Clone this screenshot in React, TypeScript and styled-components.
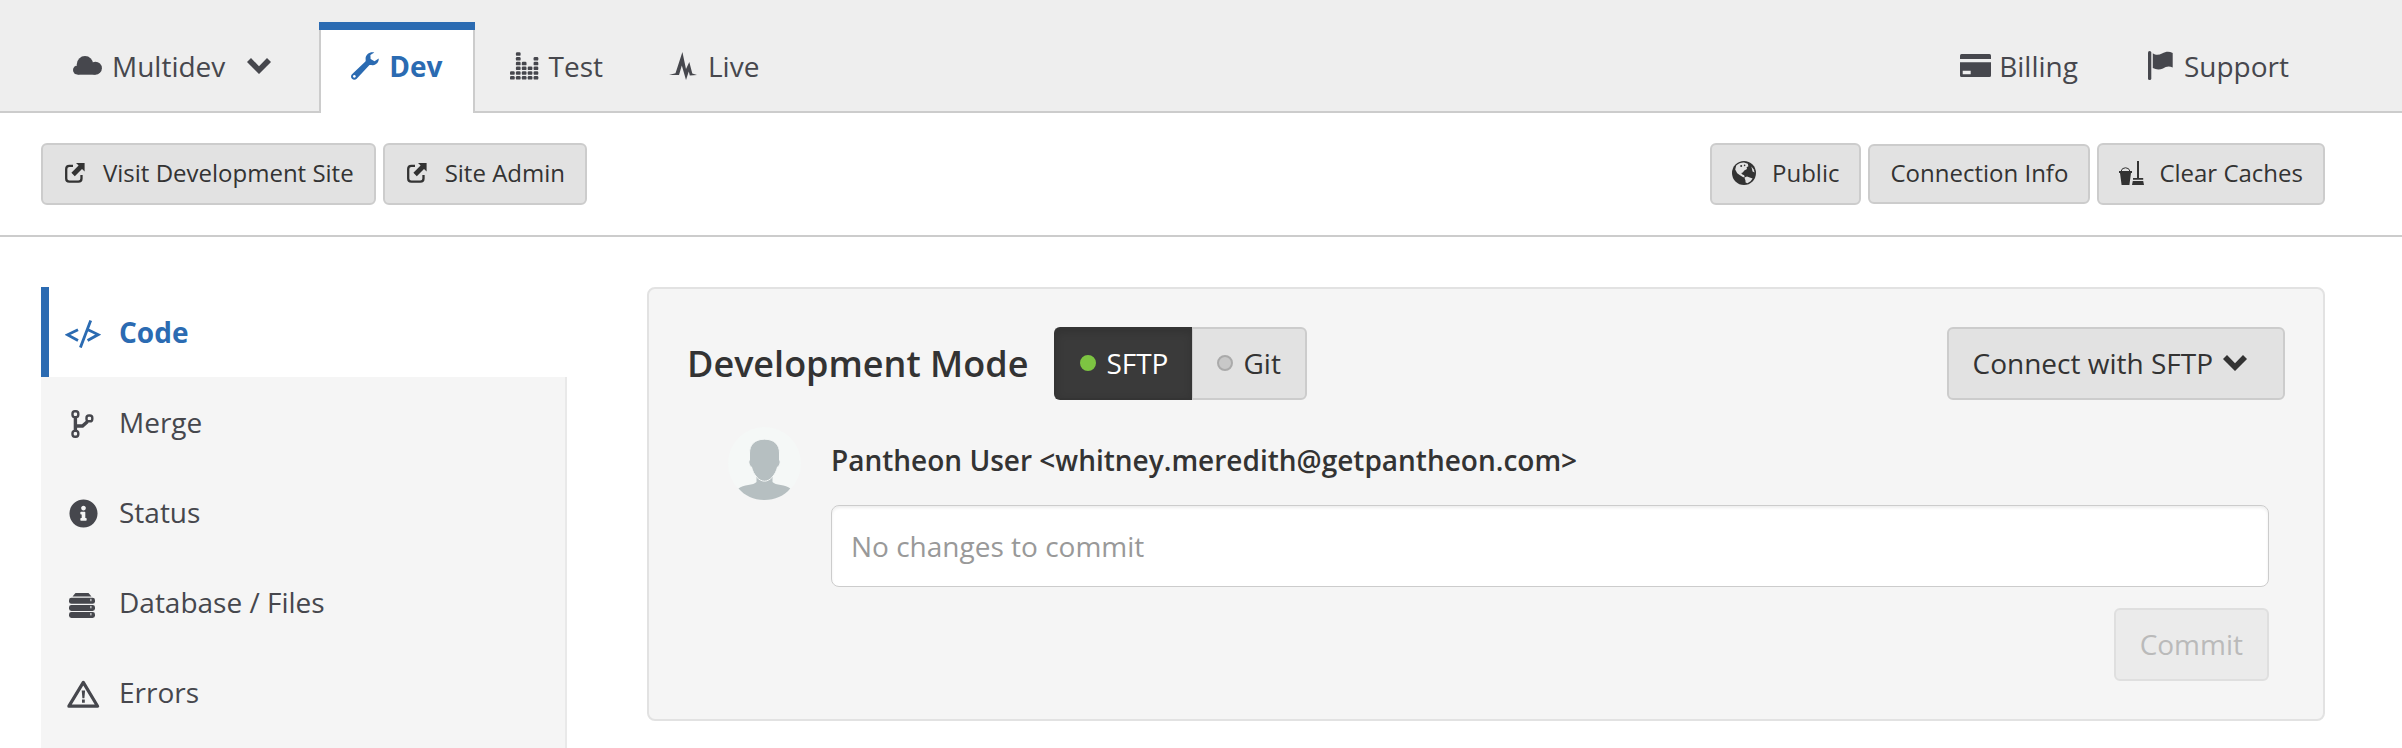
import React from "react";
import styled, { createGlobalStyle, css } from "styled-components";
import { FaInfoCircle } from "react-icons/fa";

const GlobalStyle = createGlobalStyle`
  *, *::before, *::after { box-sizing: border-box; }
  body {
    margin: 0;
    background: #fff;
    color: #333;
    font-family: "Open Sans", "Noto Sans", sans-serif;
    font-size: 28px;
    line-height: 38px;
  }
  button, input { font: inherit; color: inherit; }
  svg { display: block; flex: none; }
`;

const ink = "#46474d";
const blue = "#2b6bb2";
const surface = "#f5f5f5";

/* ---------- layout ---------- */

const Page = styled.div`
  display: flex;
  flex-direction: column;
  min-height: 100vh;
`;

const Header = styled.header`
  display: flex;
  justify-content: space-between;
  padding: 22px 78px 0 41px;
  background: #eee;
  box-shadow: inset 0 -2px #ccc;
`;

const NavGroup = styled.nav`
  display: flex;
`;

const Tab = styled.a<{ $active?: boolean }>`
  display: flex;
  align-items: center;
  gap: 10px;
  height: 91px;
  padding: 0 33px 12px;
  border-top: 8px solid transparent;
  color: ${ink};
  text-decoration: none;
  white-space: nowrap;
  ${(p) =>
    p.$active &&
    css`
      margin-right: 2px;
      padding: 0 32px 12px;
      border-top-color: ${blue};
      background: #fff;
      box-shadow: inset 2px 0 #ccc, inset -2px 0 #ccc;
      color: ${blue};
      font-weight: 700;
    `}
`;

const AccountLink = styled(Tab)`
  gap: 8px;
  padding: 0 35px 12px;
`;

const EnvironmentMenu = styled.button`
  display: flex;
  align-items: center;
  gap: 10px;
  height: 91px;
  padding: 0 48px 4px 32px;
  border: 0;
  background: none;
  color: ${ink};
`;

const MenuLabel = styled.span`
  margin-right: 12px;
`;

const Toolbar = styled.div`
  display: flex;
  justify-content: space-between;
  align-items: center;
  padding: 30px 77px 30px 41px;
  border-bottom: 2px solid #ccc;
`;

const ButtonGroup = styled.div`
  display: flex;
  align-items: center;
  gap: 7px;
`;

const buttonFace = css`
  display: inline-flex;
  align-items: center;
  border: 2px solid #ccc;
  border-radius: 6px;
  background: #e2e2e2;
  color: #333;
  white-space: nowrap;
`;

const ToolButton = styled.button<{ $plain?: boolean }>`
  ${buttonFace}
  gap: 16px;
  height: ${(p) => (p.$plain ? 60 : 62)}px;
  padding: 0 20px 2px;
  font-size: 24px;
  line-height: 32px;
`;

const ToolIcon = styled.span`
  display: flex;
  justify-content: center;
  width: 24px;
`;

const Content = styled.div`
  display: flex;
  flex: 1;
  gap: 80px;
  padding: 50px 77px 0 41px;
`;

const Sidebar = styled.nav`
  display: flex;
  flex-direction: column;
  width: 526px;
  flex: none;
  background: ${surface};
  box-shadow: inset -2px 0 #e9e9e9;
`;

const SideLink = styled.a<{ $active?: boolean }>`
  display: flex;
  align-items: center;
  gap: 18px;
  height: 90px;
  padding-left: 24px;
  color: ${ink};
  text-decoration: none;
  ${(p) =>
    p.$active &&
    css`
      padding-left: 16px;
      border-left: 8px solid ${blue};
      background: #fff;
      color: ${blue};
      font-weight: 700;
    `}
`;

const SideIcon = styled.span`
  display: flex;
  justify-content: center;
  width: 36px;
  padding-top: 3px;
`;

const Panel = styled.main`
  flex: 1;
  align-self: flex-start;
  padding: 38px;
  border: 2px solid #e2e2e2;
  border-radius: 8px;
  background: ${surface};
`;

const PanelHeader = styled.div`
  display: flex;
  align-items: center;
`;

const Title = styled.h1`
  margin: 0 26px 0 0;
  font-size: 36px;
  line-height: 48px;
  font-weight: 600;
`;

const Toggle = styled.div`
  display: flex;
  margin-right: auto;
`;

const ToggleButton = styled.button<{ $on?: boolean }>`
  ${buttonFace}
  gap: 10px;
  height: 73px;
  padding: 0 24px 2px;
  border-left-width: 1px;
  border-radius: 0 6px 6px 0;
  ${(p) =>
    p.$on &&
    css`
      border-color: #343434;
      border-width: 2px 0 2px 2px;
      border-radius: 6px 0 0 6px;
      background: #3a3a3a;
      box-shadow: inset 0 3px 8px rgba(0, 0, 0, 0.15);
      color: #fff;
    `}
`;

const Dot = styled.span<{ $on?: boolean }>`
  width: 16px;
  height: 16px;
  border-radius: 50%;
  border: 2px solid ${(p) => (p.$on ? "#7dc442" : "#aaa")};
  background: ${(p) => (p.$on ? "#7dc442" : "#c8c8c8")};
`;

const ConnectButton = styled.button`
  ${buttonFace}
  gap: 10px;
  height: 73px;
  padding: 0 36px 2px 24px;
`;

const CommitArea = styled.form`
  display: flex;
  gap: 30px;
  padding: 27px 16px 0 41px;
`;

const CommitFields = styled.div`
  display: flex;
  flex: 1;
  flex-direction: column;
  padding-top: 14px;
`;

const Author = styled.label`
  margin-bottom: 26px;
  font-weight: 600;
`;

const MessageInput = styled.input`
  width: 100%;
  height: 82px;
  margin-bottom: 21px;
  padding: 0 19px;
  border: 1px solid #ccc;
  border-radius: 8px;
  background: #fff;
  box-shadow: inset 0 2px 3px rgba(0, 0, 0, 0.07);
  &::placeholder { color: #999; opacity: 1; }
`;

const CommitButton = styled.button`
  ${buttonFace}
  align-self: flex-end;
  height: 73px;
  padding: 0 24px 2px;
  border-color: #dfdfdf;
  background: #ebebeb;
  color: #bababa;
`;

/* ---------- icons ---------- */

const Icon = ({ w, h, children }: { w: number; h: number; children: React.ReactNode }) => (
  <svg width={w} height={h} viewBox={`0 0 ${w} ${h}`} fill="currentColor" aria-hidden="true">
    {children}
  </svg>
);

const Cloud = () => (
  <Icon w={29} h={19}>
    <circle cx="12" cy="8.2" r="8.2" />
    <circle cx="4.6" cy="14" r="4.6" />
    <circle cx="22.4" cy="12.2" r="6.5" />
    <path d="M4.6 8H22.4V18.7H4.6Z" />
  </Icon>
);

const Chevron = () => (
  <Icon w={24} h={16}>
    <path d="M0 4L4 0L12 8.2L20 0L24 4L12 16Z" />
  </Icon>
);

const Wrench = () => (
  <Icon w={28} h={28}>
    <path
      fillRule="evenodd"
      d="M23.3.5C18.8-.5 14.8 2.5 14.6 6.3C14.5 7.8 15 8.8 14.4 9.4L1 22.2C-.3 23.5-.3 25.5 1 26.8C2.3 28.1 4.4 28.1 5.7 26.8L18 13.5C18.9 12.7 20.4 13.4 22 13.2C25.6 12.8 28 10 27.7 6.5L23.5 9.2L19.6 6.9L19.4 3.1ZM3.4 23A1.4 1.4 0 1 1 3.3 23Z"
    />
  </Icon>
);

const Equalizer = () => (
  <Icon w={29} h={28}>
    {[2, 6, 4, 3, 5].map((count, col) =>
      Array.from({ length: count }, (_, row) => (
        <rect key={`${col}-${row}`} x={col * 5.9} y={24 - row * 4.75} width="4.7" height="3.6" rx="1.2" />
      ))
    )}
  </Icon>
);

const Pulse = () => (
  <Icon w={29} h={28}>
    <path d="M0 22.9L6.5 21.3L13.4 0L17 17L20.3 10L23.3 21.5L28 22.9L20.8 23.6L19.8 19.5L17 28L12.8 13.5L10 22.9Z" />
  </Icon>
);

const Card = () => (
  <Icon w={31} h={23}>
    <path d="M1.5 0H29.5Q31 0 31 1.5V5H0V1.5Q0 0 1.5 0Z" />
    <path fillRule="evenodd" d="M0 8.3H31V21.5Q31 23 29.5 23H1.5Q0 23 0 21.5ZM2.7 16.7V20.3H10.7V16.7Z" />
  </Icon>
);

const Flag = () => (
  <Icon w={28} h={29}>
    <rect width="3.3" height="29" rx="1.6" />
    <path d="M4.8 2.3C8 4.5 11 4 14 2.5C18 .5 21 .3 24.7 2V16.5C21 14.8 18 15.5 15 17.5C11.5 19 8 18.8 4.8 17Z" />
  </Icon>
);

const External = () => (
  <Icon w={20} h={20}>
    <path
      d="M8 2.9H4.4Q1.2 2.9 1.2 6.1V15.4Q1.2 18.6 4.4 18.6H13.3Q16.5 18.6 16.5 15.4V12"
      fill="none"
      stroke="currentColor"
      strokeWidth="2.3"
    />
    <path d="M11 0H19.6V8.6L17 6L9.8 13.2L6.4 9.8L13.6 2.6Z" />
  </Icon>
);

const Globe = () => (
  <Icon w={24} h={24}>
    <circle cx="12" cy="12" r="12" />
    <g fill="#e2e2e2">
      <path d="M4.2 4.6C6.5 2.5 9 1.5 12 1.6L15.8 2.8L16.4 5.2L14.6 6.2L15 8L12.3 9.4L10.8 11.6L9.2 12L10.4 13.4L12.2 14.2L12.6 16L11.2 16.2L8 14.2L5.2 12.2L3.2 8.6Z" />
      <path d="M12.4 16.6L15 15.6L17.8 16.4L20.6 17.4L18.6 20.2L15.4 22.2L13.6 21.6L13.4 19.2Z" />
      <path d="M19.4 5.4L21.6 8.2L22.6 11.4L20.6 10.4Z" />
    </g>
    <circle cx="9.2" cy="5" r="1" />
    <circle cx="12.6" cy="4.4" r="0.8" />
  </Icon>
);

const Bucket = () => (
  <Icon w={25} h={24}>
    <path d="M0 10H13V12H12L10.4 24H2.6L1 12H0Z" />
    <path d="M2 10.4A4.6 4.6 0 0 1 11 10.4" fill="none" stroke="currentColor" />
    <path d="M18 0H20V17H24.2V18.8H14V17H18ZM13.8 20H24.2L25 24H13Z" />
  </Icon>
);

const Code = () => (
  <Icon w={36} h={28}>
    <path
      d="M13 9.7L2.4 14.8L13 20.4M23 9.7L33.2 14.6L22.6 20.4M25.7.5L15.4 27.6"
      fill="none"
      stroke="currentColor"
      strokeWidth="2.8"
    />
  </Icon>
);

const Branch = () => (
  <Icon w={24} h={28}>
    <g fill="none" stroke="currentColor" strokeWidth="2.4">
      <rect x="1.5" y="1.3" width="5.8" height="5.8" rx="2.4" />
      <rect x="1.5" y="20.9" width="5.8" height="5.8" rx="2.4" />
      <rect x="15.5" y="5.5" width="5.8" height="5.8" rx="2.4" />
      <path d="M4.4 8V20.5M4.4 16H11.5L16.6 11.4" strokeWidth="3.4" />
    </g>
  </Icon>
);

const Database = () => (
  <Icon w={28} h={28}>
    <path d="M6.5 3H19.5L22.5 6.6H3.5Z" />
    {[7.8, 14.9, 22].map((y) => (
      <React.Fragment key={y}>
        <rect y={y} width="26" height="6" rx="2.4" />
        <rect x="21.4" y={y + 1} width="1" height="2.4" fill={surface} />
      </React.Fragment>
    ))}
  </Icon>
);

const Warning = () => (
  <Icon w={33} h={28}>
    <path d="M16.3 2.4L30.6 26.2H1.9Z" fill="none" stroke="currentColor" strokeWidth="3.2" strokeLinejoin="round" />
    <path d="M14.7 10.4H18.1L17.4 18.2H15.4ZM15 19.6H17.8V22.8H15Z" />
  </Icon>
);

const Avatar = () => (
  <svg width="73" height="73" viewBox="0 0 73 73" role="img" aria-label="Pantheon User">
    <circle cx="36.5" cy="36.5" r="36.5" fill="#f5f8f7" />
    <path
      fill="#b6bfc1"
      d="M28.5 50V55C26 58.500 15 57.500 10.500 61.500C17 69 26 73 36.500 73C47 73 56 69 62.300 61.500C58 57.500 47 58.500 44.500 55V50Z"
    />
    <path
      fill="#b6bfc1"
      stroke="#f5f8f7"
      d="M36.500 12.200C26.500 12.200 21.500 18 21.500 26V33C20 35 21.500 39 23.500 40C25.500 48 31 54.200 36.500 54.200C42 54.200 47.500 48 49.500 40C51.500 39 53 35 51.500 33V26C51.500 18 46.500 12.200 36.500 12.200Z"
    />
  </svg>
);

/* ---------- page ---------- */

const sections = [
  { label: "Code", icon: <Code />, active: true },
  { label: "Merge", icon: <Branch /> },
  { label: "Status", icon: <FaInfoCircle size={29} /> },
  { label: "Database / Files", icon: <Database /> },
  { label: "Errors", icon: <Warning /> },
];

export default function App() {
  return (
    <>
      <GlobalStyle />
      <Page>
        <Header>
          <NavGroup aria-label="Environments">
            <EnvironmentMenu type="button" aria-haspopup="menu">
              <Cloud />
              <MenuLabel>Multidev</MenuLabel>
              <Chevron />
            </EnvironmentMenu>
            <Tab href="#dev" $active aria-current="page">
              <Wrench />
              Dev
            </Tab>
            <Tab href="#test">
              <Equalizer />
              Test
            </Tab>
            <Tab href="#live">
              <Pulse />
              Live
            </Tab>
          </NavGroup>
          <NavGroup aria-label="Account">
            <AccountLink href="#billing">
              <Card />
              Billing
            </AccountLink>
            <AccountLink href="#support">
              <Flag />
              Support
            </AccountLink>
          </NavGroup>
        </Header>

        <Toolbar>
          <ButtonGroup>
            <ToolButton type="button">
              <ToolIcon><External /></ToolIcon>
              Visit Development Site
            </ToolButton>
            <ToolButton type="button">
              <ToolIcon><External /></ToolIcon>
              Site Admin
            </ToolButton>
          </ButtonGroup>
          <ButtonGroup>
            <ToolButton type="button">
              <ToolIcon><Globe /></ToolIcon>
              Public
            </ToolButton>
            <ToolButton type="button" $plain>Connection Info</ToolButton>
            <ToolButton type="button">
              <ToolIcon><Bucket /></ToolIcon>
              Clear Caches
            </ToolButton>
          </ButtonGroup>
        </Toolbar>

        <Content>
          <Sidebar aria-label="Sections">
            {sections.map((s) => (
              <SideLink key={s.label} href="#section" $active={s.active}>
                <SideIcon>{s.icon}</SideIcon>
                {s.label}
              </SideLink>
            ))}
          </Sidebar>

          <Panel>
            <PanelHeader>
              <Title>Development Mode</Title>
              <Toggle role="group" aria-label="Development mode">
                <ToggleButton type="button" $on aria-pressed="true">
                  <Dot $on />
                  SFTP
                </ToggleButton>
                <ToggleButton type="button" aria-pressed="false">
                  <Dot />
                  Git
                </ToggleButton>
              </Toggle>
              <ConnectButton type="button" aria-haspopup="menu">
                Connect with SFTP
                <Chevron />
              </ConnectButton>
            </PanelHeader>
            <CommitArea>
              <Avatar />
              <CommitFields>
                <Author htmlFor="message">Pantheon User &lt;whitney.meredith@getpantheon.com&gt;</Author>
                <MessageInput id="message" type="text" placeholder="No changes to commit" />
                <CommitButton type="submit" disabled>Commit</CommitButton>
              </CommitFields>
            </CommitArea>
          </Panel>
        </Content>
      </Page>
    </>
  );
}
